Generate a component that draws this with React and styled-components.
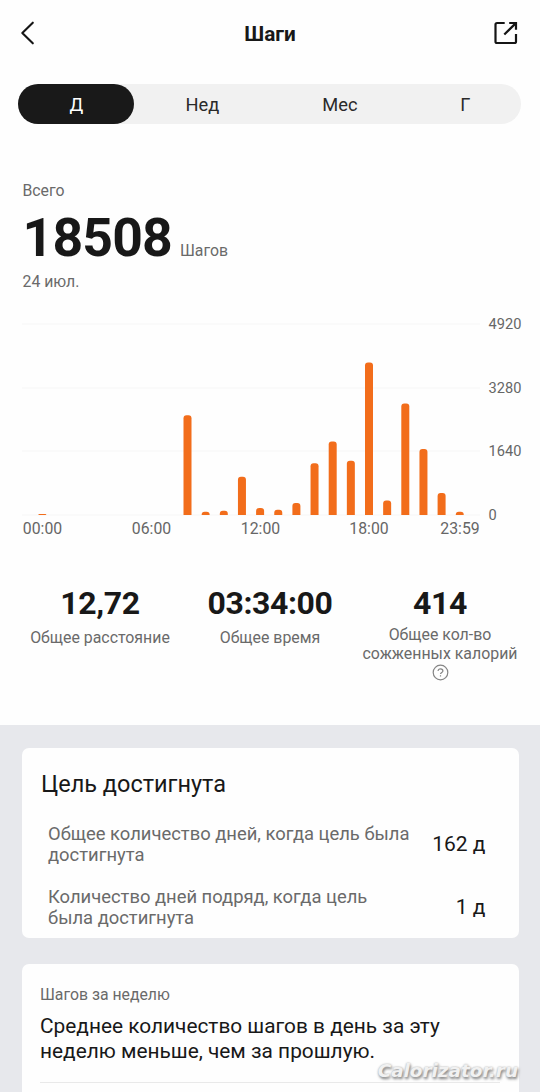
import React from "react";
import styled, { createGlobalStyle } from "styled-components";

const HOURS = [
  514, null, null, null, null, null, null, null, 415.3, 511.7, 510.7, 476.7,
  508, 509.7, 503, 463.3, 441.5, 460.7, 362.5, 500.5, 403.6, 449, 493, 511.7,
];
const SCALE = [
  { y: 324, label: "4920" },
  { y: 388, label: "3280" },
  { y: 451, label: "1640" },
  { y: 515, label: "0" },
];
const TIMES = [
  { x: 42.5, label: "00:00" },
  { x: 151.5, label: "06:00" },
  { x: 260.5, label: "12:00" },
  { x: 369, label: "18:00" },
  { x: 460, label: "23:59" },
];

// bar with rounded top corners standing on the zero line
function barPath(hour, top) {
  const x = 38.3 + hour * 18.15;
  const r = Math.min(3, 515 - top);
  return `M${x} 515V${top + r}q0 ${-r} ${r} ${-r}h${8 - 2 * r}q${r} 0 ${r} ${r}V515z`;
}

function StepsChart() {
  return (
    <Chart viewBox="0 300 540 250">
      {SCALE.map((s) => (
        <g key={s.label}>
          <rect x="22" y={s.y - 0.5} width="458" height="1" fill="#f6f6f6" />
          <AxisText x="488.6" y={s.y + 5.4} $size={14.6}>
            {s.label}
          </AxisText>
        </g>
      ))}
      {HOURS.map((top, i) =>
        top ? <path key={i} d={barPath(i, top)} fill="#f26d1b" /> : null
      )}
      {TIMES.map((t) => (
        <AxisText key={t.label} x={t.x} y="534" textAnchor="middle" $size={15.8}>
          {t.label}
        </AxisText>
      ))}
    </Chart>
  );
}

function App() {
  return (
    <Page>
      <GlobalStyle />
      <Header>
        <svg width="24" height="24" viewBox="0 0 24 24">
          <path
            d="M15.8 1.7 5.3 12l10.5 10.3"
            fill="none"
            stroke="#151515"
            strokeWidth="2.1"
            strokeLinecap="round"
            strokeLinejoin="round"
          />
        </svg>
        <Title>Шаги</Title>
        <svg width="24" height="24" viewBox="0 0 24 24">
          <path
            d="M10.7 2H3.1Q1.5 2 1.5 3.6V20.4Q1.5 22 3.1 22H20.4Q22 22 22 20.4V13M15.2 2H22V8.7M21.6 2.4 10.3 13.5"
            fill="none"
            stroke="#151515"
            strokeWidth="2.2"
          />
        </svg>
      </Header>
      <Tabs>
        <Tab $width={116} $active>
          Д
        </Tab>
        <Tab $width={136}>Нед</Tab>
        <Tab $width={139}>Мес</Tab>
        <Tab $width={112}>Г</Tab>
      </Tabs>
      <Total>
        <Caption>Всего</Caption>
        <TotalRow>
          <TotalValue>18508</TotalValue>
          <Caption>Шагов</Caption>
        </TotalRow>
        <Caption>24 июл.</Caption>
      </Total>
      <StepsChart />
      <Stats>
        <Stat>
          <StatValue>12,72</StatValue>
          <StatLabel>Общее расстояние</StatLabel>
        </Stat>
        <Stat>
          <StatValue>03:34:00</StatValue>
          <StatLabel>Общее время</StatLabel>
        </Stat>
        <Stat>
          <StatValue>414</StatValue>
          <StatLabel $multi>
            Общее кол-во
            <br />
            сожженных калорий
          </StatLabel>
          <HelpIcon viewBox="0 0 17 17">
            <circle cx="8.5" cy="8.5" r="7.3" />
            <path d="M6.1 7.1C6.1 5.6 7.1 4.8 8.5 4.8S10.9 5.6 10.9 6.9C10.9 8.4 8.5 8.4 8.5 10.1M8.5 11.3V12.5" />
          </HelpIcon>
        </Stat>
      </Stats>
      <Cards>
        <GoalCard>
          <GoalTitle>Цель достигнута</GoalTitle>
          <GoalRow>
            <GoalText>
              Общее количество дней, когда цель была
              <br />
              достигнута
            </GoalText>
            <GoalValue>162 д</GoalValue>
          </GoalRow>
          <GoalRow>
            <GoalText>
              Количество дней подряд, когда цель
              <br />
              была достигнута
            </GoalText>
            <GoalValue>1 д</GoalValue>
          </GoalRow>
        </GoalCard>
        <WeekCard>
          <Caption>Шагов за неделю</Caption>
          <WeekText>
            Среднее количество шагов в день за эту
            <br />
            неделю меньше, чем за прошлую.
          </WeekText>
          <Divider />
        </WeekCard>
      </Cards>
      <Watermark>Calorizator.ru</Watermark>
    </Page>
  );
}

const GlobalStyle = createGlobalStyle`
*{
  box-sizing:border-box;
}
body{
  margin:0;
  background:#fefefe;
  font-family:Roboto, "Liberation Sans", sans-serif;
  color:#181818;
}
`;

const Page = styled.div`
  position: relative;
  width: 540px;
  height: 1092px;
  overflow: hidden;
  display: flex;
  flex-direction: column;
`;

const Header = styled.header`
  flex: none;
  height: 84px;
  padding: 21px 22px 0 17px;
  display: flex;
  align-items: flex-start;
  justify-content: space-between;
`;

const Title = styled.h1`
  margin: 0 0 0 5px;
  font-size: 20.8px;
  line-height: 26px;
  font-weight: 700;
`;

const Tabs = styled.nav`
  flex: none;
  display: flex;
  width: 503px;
  height: 39.5px;
  margin-left: 18.4px;
  border-radius: 20px;
  background: #f1f1f1;
`;

const Tab = styled.div`
  width: ${(props) => props.$width}px;
  border-radius: 20px;
  background: ${(props) => (props.$active ? "#191919" : "transparent")};
  color: ${(props) => (props.$active ? "#fff" : "#2a2a2a")};
  font-size: 18.3px;
  line-height: 41px;
  text-align: center;
`;

const Total = styled.section`
  flex: none;
  height: 176.5px;
  padding: 57.5px 22.5px 0;
`;

const Caption = styled.div`
  font-size: 15.8px;
  line-height: 20px;
  color: #6a6a6a;
`;

const TotalRow = styled.div`
  display: flex;
  align-items: baseline;
  gap: 8px;
  height: 71px;
`;

const TotalValue = styled.div`
  font-size: 53.5px;
  line-height: 73px;
  font-weight: 700;
  letter-spacing: -0.8px;
`;

const Chart = styled.svg`
  display: block;
  width: 540px;
  height: 250px;
  flex: none;
`;

const AxisText = styled.text`
  font-size: ${(props) => props.$size}px;
  fill: #666;
`;

const Stats = styled.section`
  flex: none;
  display: flex;
  height: 175px;
  padding: 34px 15px 0;
`;

const Stat = styled.div`
  width: 170px;
  display: flex;
  flex-direction: column;
  align-items: center;
`;

const StatValue = styled.div`
  font-size: 32px;
  line-height: 38px;
  font-weight: 700;
  letter-spacing: -0.4px;
`;

const StatLabel = styled.div`
  margin-top: ${(props) => (props.$multi ? 3 : 6)}px;
  font-size: 15.9px;
  line-height: 19px;
  color: #6a6a6a;
  text-align: center;
  white-space: nowrap;
`;

const HelpIcon = styled.svg`
  width: 17px;
  height: 17px;
  margin-top: 1px;
  fill: none;
  stroke: #858585;
  stroke-width: 1.2;
`;

const Cards = styled.main`
  flex: 1;
  min-height: 0;
  padding: 22.5px 21.5px 0;
  background: #e7e8ec;
`;

const GoalCard = styled.section`
  height: 190px;
  padding: 21px 33px 0 19.5px;
  border-radius: 7px;
  background: #fefefe;
`;

const GoalTitle = styled.h2`
  margin: 0 0 24px;
  font-size: 23.5px;
  line-height: 30px;
  font-weight: 400;
`;

const GoalRow = styled.div`
  display: flex;
  align-items: center;
  justify-content: space-between;
  height: 43px;
  margin-bottom: 20px;
  padding-left: 7px;
`;

const GoalText = styled.div`
  font-size: 18.4px;
  line-height: 21.5px;
  color: #6a6a6a;
  white-space: nowrap;
`;

const GoalValue = styled.div`
  font-size: 21px;
  line-height: 25px;
`;

const WeekCard = styled.section`
  height: 160px;
  margin-top: 26.5px;
  padding: 21px 19px 0 18.5px;
  border-radius: 7px;
  background: #fefefe;
`;

const WeekText = styled.p`
  margin: 9px 0 0;
  font-size: 20.85px;
  line-height: 24.7px;
  white-space: nowrap;
`;

const Divider = styled.div`
  height: 1px;
  margin-top: 19px;
  background: #e9e9e9;
`;

// site mark laid over the bottom right corner
const Watermark = styled.div`
  position: absolute;
  right: 22px;
  bottom: 10px;
  font: italic 700 18.4px/22px "DejaVu Sans", sans-serif;
  color: #f1f1f1;
  text-shadow: 0 0 2px #aaa, 1px 2px 3px #777;
`;

export default App;
